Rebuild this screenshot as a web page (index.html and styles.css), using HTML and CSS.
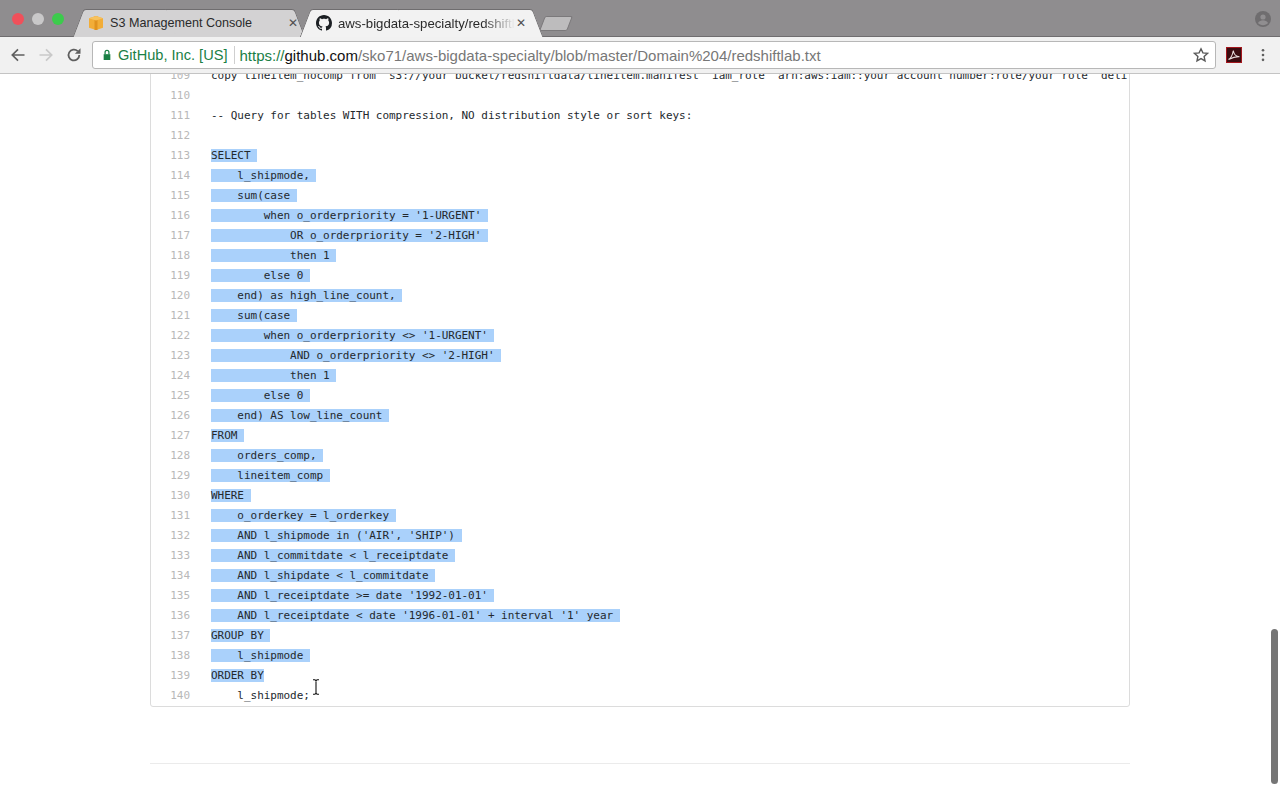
FILE: index.html
```html
<!DOCTYPE html>
<html lang="en">
<head>
<meta charset="utf-8">
<title>aws-bigdata-specialty/redshiftlab.txt</title>
<link rel="stylesheet" href="styles.css">
</head>
<body>
<header class="chrome">
  <div class="tabstrip">
    <div class="lights"><span class="light red"></span><span class="light grey"></span><span class="light green"></span></div>
    <div class="tab tab-back">
      <svg class="favicon" viewBox="0 0 16 16"><path fill="#f2ad38" d="M1 3.200 8 1l7 2.200v9.600L8 15l-7-2.200z"/><path fill="#e0921f" d="M6.500 1.500h3V15h-3z"/><path fill="#f7c25e" d="M1 3.200 8 5.500l7-2.300L8 1z"/></svg>
      <span class="tab-title">S3 Management Console</span>
      <span class="tab-x">✕</span>
    </div>
    <div class="tab tab-active">
      <svg class="favicon" viewBox="0 0 16 16"><path fill="#1b1f23" d="M8 0C3.58 0 0 3.58 0 8c0 3.54 2.29 6.53 5.47 7.59.4.07.55-.17.55-.38 0-.19-.01-.82-.01-1.49-2.01.37-2.53-.49-2.69-.94-.09-.23-.48-.94-.82-1.13-.28-.15-.68-.52-.01-.53.63-.01 1.08.58 1.23.82.72 1.21 1.87.87 2.33.66.07-.52.28-.87.51-1.07-1.78-.2-3.64-.89-3.64-3.95 0-.87.31-1.59.82-2.15-.08-.2-.36-1.02.08-2.12 0 0 .67-.21 2.2.82.64-.18 1.32-.27 2-.27.68 0 1.36.09 2 .27 1.53-1.04 2.2-.82 2.2-.82.44 1.1.16 1.92.08 2.12.51.56.82 1.27.82 2.15 0 3.07-1.87 3.75-3.65 3.95.29.25.54.73.54 1.48 0 1.07-.01 1.93-.01 2.2 0 .21.15.46.55.38A8.013 8.013 0 0016 8c0-4.42-3.58-8-8-8z"/></svg>
      <span class="tab-title tab-fade">aws-bigdata-specialty/redshiftlab.txt</span>
      <span class="tab-x">✕</span>
    </div>
    <div class="newtab"></div>
    <svg class="avatar" viewBox="0 0 16 16"><circle cx="8" cy="8" r="8" fill="#6f6d6f"/><circle cx="8" cy="6" r="2.600" fill="#908e90"/><path fill="#908e90" d="M3 12c.8-1.900 3-2.700 5-2.700s4.200.8 5 2.700c-1.200 1.400-3 2.200-5 2.200s-3.800-.8-5-2.200z"/></svg>
  </div>
  <div class="toolbar">
    <svg class="nav" viewBox="0 0 16 16"><path fill="none" stroke="#5f5f5f" stroke-width="1.700" d="M14.500 8H2.500M8 2.300 2.300 8 8 13.700"/></svg>
    <svg class="nav" viewBox="0 0 16 16"><path fill="none" stroke="#c9c9c9" stroke-width="1.700" d="M1.500 8h12M8 2.300 13.700 8 8 13.700"/></svg>
    <svg class="nav" viewBox="0 0 16 16"><path fill="none" stroke="#5f5f5f" stroke-width="1.800" d="M13.300 8a5.400 5.400 0 1 1-1.600-3.800"/><path fill="#5f5f5f" d="M14.500 1.200v5.600H8.900z"/></svg>
    <div class="omnibox">
      <svg class="lock" viewBox="0 0 12 14"><path fill="#1a8045" d="M2 6h8v7H2z"/><path fill="none" stroke="#1a8045" stroke-width="1.500" d="M3.700 6V3.800a2.300 2.300 0 0 1 4.600 0V6"/></svg>
      <span class="org">GitHub, Inc. [US]</span>
      <span class="sep"></span>
      <span class="url"><span class="scheme">https://</span><span class="host">github.com</span><span class="path">/sko71/aws-bigdata-specialty/blob/master/Domain%204/redshiftlab.txt</span></span>
      <svg class="star" viewBox="0 0 16 16"><path fill="none" stroke="#5a5a5a" stroke-width="1.400" d="M8 1.800l1.900 4.100 4.500.5-3.300 3 .9 4.500L8 11.600l-4 2.300.9-4.500-3.300-3 4.500-.5z"/></svg>
    </div>
    <svg class="pdf" viewBox="0 0 16 16"><rect width="16" height="16" fill="#3a0c10"/><rect x=".5" y=".5" width="15" height="15" fill="none" stroke="#a3161d"/><path fill="none" stroke="#e8dcdc" stroke-width="1.100" d="M2.500 12.500c2-1 4-4.500 4.800-9 .5 4 2.500 6 6.200 6.200-3-.2-7 .8-11 2.800z"/></svg>
    <svg class="dots" viewBox="0 0 4 16"><circle cx="2" cy="2.500" r="1.500" fill="#5f5f5f"/><circle cx="2" cy="8" r="1.500" fill="#5f5f5f"/><circle cx="2" cy="13.500" r="1.500" fill="#5f5f5f"/></svg>
  </div>
</header>
<main class="page">
  <div class="blob">
    <div class="row"><span class="num">109</span><span class="code">copy lineitem_nocomp from 's3://your bucket/redshiftdata/lineitem.manifest' iam_role 'arn:aws:iam::your account number:role/your role' deli</span></div>
    <div class="row"><span class="num">110</span><span class="code"></span></div>
    <div class="row"><span class="num">111</span><span class="code">-- Query for tables WITH compression, NO distribution style or sort keys:</span></div>
    <div class="row"><span class="num">112</span><span class="code"></span></div>
    <div class="row"><span class="num">113</span><span class="code"><span class="sel">SELECT </span></span></div>
    <div class="row"><span class="num">114</span><span class="code"><span class="sel">    l_shipmode, </span></span></div>
    <div class="row"><span class="num">115</span><span class="code"><span class="sel">    sum(case </span></span></div>
    <div class="row"><span class="num">116</span><span class="code"><span class="sel">        when o_orderpriority = '1-URGENT' </span></span></div>
    <div class="row"><span class="num">117</span><span class="code"><span class="sel">            OR o_orderpriority = '2-HIGH' </span></span></div>
    <div class="row"><span class="num">118</span><span class="code"><span class="sel">            then 1 </span></span></div>
    <div class="row"><span class="num">119</span><span class="code"><span class="sel">        else 0 </span></span></div>
    <div class="row"><span class="num">120</span><span class="code"><span class="sel">    end) as high_line_count, </span></span></div>
    <div class="row"><span class="num">121</span><span class="code"><span class="sel">    sum(case </span></span></div>
    <div class="row"><span class="num">122</span><span class="code"><span class="sel">        when o_orderpriority &lt;&gt; '1-URGENT' </span></span></div>
    <div class="row"><span class="num">123</span><span class="code"><span class="sel">            AND o_orderpriority &lt;&gt; '2-HIGH' </span></span></div>
    <div class="row"><span class="num">124</span><span class="code"><span class="sel">            then 1 </span></span></div>
    <div class="row"><span class="num">125</span><span class="code"><span class="sel">        else 0 </span></span></div>
    <div class="row"><span class="num">126</span><span class="code"><span class="sel">    end) AS low_line_count </span></span></div>
    <div class="row"><span class="num">127</span><span class="code"><span class="sel">FROM </span></span></div>
    <div class="row"><span class="num">128</span><span class="code"><span class="sel">    orders_comp, </span></span></div>
    <div class="row"><span class="num">129</span><span class="code"><span class="sel">    lineitem_comp </span></span></div>
    <div class="row"><span class="num">130</span><span class="code"><span class="sel">WHERE </span></span></div>
    <div class="row"><span class="num">131</span><span class="code"><span class="sel">    o_orderkey = l_orderkey </span></span></div>
    <div class="row"><span class="num">132</span><span class="code"><span class="sel">    AND l_shipmode in ('AIR', 'SHIP') </span></span></div>
    <div class="row"><span class="num">133</span><span class="code"><span class="sel">    AND l_commitdate &lt; l_receiptdate </span></span></div>
    <div class="row"><span class="num">134</span><span class="code"><span class="sel">    AND l_shipdate &lt; l_commitdate </span></span></div>
    <div class="row"><span class="num">135</span><span class="code"><span class="sel">    AND l_receiptdate &gt;= date '1992-01-01' </span></span></div>
    <div class="row"><span class="num">136</span><span class="code"><span class="sel">    AND l_receiptdate &lt; date '1996-01-01' + interval '1' year </span></span></div>
    <div class="row"><span class="num">137</span><span class="code"><span class="sel">GROUP BY </span></span></div>
    <div class="row"><span class="num">138</span><span class="code"><span class="sel">    l_shipmode </span></span></div>
    <div class="row"><span class="num">139</span><span class="code"><span class="sel">ORDER BY</span></span></div>
    <div class="row"><span class="num">140</span><span class="code">    l_shipmode;</span></div>
  </div>
  <hr class="rule">
  <svg class="ibeam" viewBox="0 0 8 16"><path fill="none" stroke="#111" stroke-width="1.100" d="M1 .8h2l1 1 1-1h2M4 1.800v12.400M1 15.200h2l1-1 1 1h2"/></svg>
  <div class="scrollthumb"></div>
</main>
</body>
</html>
```
FILE: styles.css
```css
* { box-sizing: border-box; }
html, body { margin: 0; height: 100%; }
body { width: 1280px; height: 800px; overflow: hidden; background: #fff; display: flex; flex-direction: column; font-family: "Liberation Sans", Arial, sans-serif; }

.chrome { flex: none; height: 74px; display: flex; flex-direction: column; }

.tabstrip { position: relative; height: 37px; background: #8f8d8f; display: flex; align-items: flex-end; padding-left: 12px; border-bottom: 1px solid #6f6d6f; }
.lights { display: flex; gap: 8px; align-self: flex-start; margin-top: 13px; width: 61px; }
.light { width: 12px; height: 12px; border-radius: 50%; }
.red { background: #f0505a; }
.grey { background: #c9c8c9; }
.green { background: #3ccb4c; }

.tab { position: relative; height: 28px; display: flex; align-items: center; font-size: 12.600px; color: #2a2a2a; margin-bottom: -1px; }
.tab::before, .tab::after { content: ""; position: absolute; top: 0; bottom: 0; width: 55%; background: var(--tab-bg); border-top: 1px solid #6f6d6f; }
.tab::before { left: 5px; transform: skewX(-21deg); border-left: 1px solid #6f6d6f; border-top-left-radius: 3px; }
.tab::after { right: 5px; transform: skewX(21deg); border-right: 1px solid #6f6d6f; border-top-right-radius: 3px; }
.tab > * { position: relative; z-index: 1; }
.tab-back { --tab-bg: #d3d2d3; width: 232px; padding-left: 15px; }
.tab-active { --tab-bg: #f2f2f2; width: 243px; margin-left: -5px; padding-left: 16px; z-index: 2; font-size: 13.200px; }
.favicon { width: 16px; height: 16px; flex: none; margin-right: 6px; }
.tab-title { white-space: nowrap; overflow: hidden; }
.tab-back .tab-title { width: 177px; }
.tab-active .tab-title { width: 177px; -webkit-mask-image: linear-gradient(to right, #000 82%, transparent 100%); mask-image: linear-gradient(to right, #000 82%, transparent 100%); }
.tab-x { font-size: 12px; color: #4f4f4f; width: 12px; text-align: center; line-height: 1; }
.newtab { position: relative; width: 28px; height: 15px; margin: 0 0 5px -1px; background: #bdbcbd; border: 1px solid #7b797b; border-radius: 2px; transform: skewX(-21deg); }
.avatar { position: absolute; right: 9px; top: 11px; width: 16px; height: 16px; }

.toolbar { height: 37px; background: #f1f1f1; border-bottom: 1px solid #c4c4c4; display: flex; align-items: center; padding: 0 15px 0 10px; }
.nav { width: 16px; height: 16px; margin-right: 12px; flex: none; }
.nav:nth-child(3) { margin-right: 10px; }
.omnibox { flex: 1; height: 28px; background: #fff; border: 1px solid #b7b7b7; border-radius: 3px; display: flex; align-items: center; padding: 0 6px 0 9px; white-space: nowrap; font-size: 14.600px; }
.lock { width: 10px; height: 12px; flex: none; margin-right: 6px; }
.org { color: #1a8045; }
.sep { width: 1px; height: 18px; background: #cfcfcf; margin: 0 5px 0 6px; }
.url { flex: 1; font-size: 15px; }
.scheme { color: #1a8045; }
.host { color: #111; }
.path { color: #777; }
.star { width: 16px; height: 16px; flex: none; }
.pdf { width: 16px; height: 16px; flex: none; margin-left: 10px; }
.dots { width: 4px; height: 14px; flex: none; margin-left: 19px; }

.page { position: relative; flex: 1; overflow: hidden; }
.blob { width: 980px; margin: -10px 0 0 150px; padding-bottom: 1px; border: 1px solid #dcdcdc; border-radius: 3px; overflow: hidden; }
.row { display: flex; height: 20px; align-items: center; font-family: "DejaVu Sans Mono", monospace; font-size: 11px; letter-spacing: -0.03px; color: #24292e; }
.num { width: 39px; flex: none; text-align: right; color: #b8b8b8; margin-right: 21px; }
.code { white-space: pre; }
.sel { background: #aad1fb; }
.rule { width: 980px; height: 1px; margin: 56px 0 0 150px; border: 0; background: #ebebeb; }

.ibeam { position: absolute; left: 312px; top: 605px; width: 8px; height: 16px; }
.scrollthumb { position: absolute; left: 1271px; top: 555px; width: 7px; height: 155px; border-radius: 4px; background: #757575; }
```
